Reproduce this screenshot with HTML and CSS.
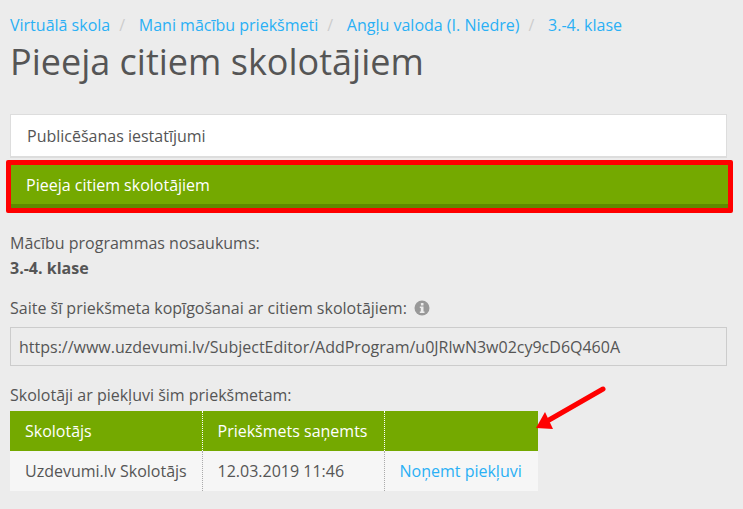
FILE: index.html
```html
<!DOCTYPE html>
<html lang="lv">
<head>
<meta charset="utf-8">
<title>Pieeja citiem skolotājiem</title>
<link rel="stylesheet" href="styles.css">
</head>
<body>
<main class="page">
  <nav class="crumbs">
    <a href="#">Virtuālā skola</a><span class="sep">/</span>
    <a href="#">Mani mācību priekšmeti</a><span class="sep">/</span>
    <a href="#">Angļu valoda (I. Niedre)</a><span class="sep">/</span>
    <a href="#">3.-4. klase</a>
  </nav>
  <h1 class="title">Pieeja citiem skolotājiem</h1>
  <div class="tab">Publicēšanas iestatījumi</div>
  <div class="frame"><div class="tab-active">Pieeja citiem skolotājiem</div></div>
  <p class="label">Mācību programmas nosaukums:</p>
  <p class="value">3.-4. klase</p>
  <p class="label link-label">Saite šī priekšmeta kopīgošanai ar citiem skolotājiem:
    <svg class="info" viewBox="0 0 16 16" width="16" height="16"><circle cx="8" cy="8" r="7.5" fill="#999"/><rect x="6.9" y="3" width="2.6" height="2.4" rx=".5" fill="#ececec"/><path d="M5.8 6.6h3.7v5h1v1.4H5.8v-1.4h1V8h-1z" fill="#ececec"/></svg>
  </p>
  <div class="url">https://www.uzdevumi.lv/SubjectEditor/AddProgram/u0JRlwN3w02cy9cD6Q460A</div>
  <p class="label table-label">Skolotāji ar piekļuvi šim priekšmetam:</p>
  <table class="grid">
    <thead>
      <tr><th class="c1">Skolotājs</th><th class="c2">Priekšmets saņemts</th><th class="c3"></th></tr>
    </thead>
    <tbody>
      <tr><td>Uzdevumi.lv Skolotājs</td><td>12.03.2019 11:46</td><td><a href="#">Noņemt piekļuvi</a></td></tr>
    </tbody>
  </table>
</main>
<svg class="arrow" viewBox="0 0 743 509" width="743" height="509"><path d="M603 389 L549 420" stroke="#f00" stroke-width="5" stroke-linecap="round" fill="none"/><path d="M536 428 L545 412 L553 429 Z" fill="#f00"/></svg>
</body>
</html>
```
FILE: styles.css
```css
* { box-sizing: border-box; }
html, body { margin: 0; padding: 0; }
body {
  position: relative;
  width: 743px;
  height: 509px;
  overflow: hidden;
  background: #ececec;
  color: #555;
  font-family: "Open Sans", sans-serif;
  font-size: 16px;
  line-height: 22px;
}
.page { padding: 14px 16px 0 10px; }
a { color: #2ab0f5; text-decoration: none; }
.crumbs { height: 22px; white-space: nowrap; }
.sep { color: #ccc; margin: 0 9.6px 0 9px; }
.title {
  margin: 1px 0 0;
  font-size: 36px;
  line-height: 50px;
  font-weight: 400;
  color: #555;
}
.tab {
  margin-top: 27px;
  height: 44px;
  padding: 0 16px;
  background: #fff;
  border: 2px solid #ddd;
  border-width: 1px 1px 2px 1px;
  line-height: 42px;
}
.frame {
  margin: 2px -6px 0 -4px;
  border: 5px solid #f00;
  border-radius: 2px;
}
.tab-active {
  height: 43px;
  padding: 0 15px;
  background: #74a900;
  border-bottom: 4px solid #5f8a00;
  color: #fff;
  line-height: 40px;
}
.label, .value { margin: 0; }
.label { margin-top: 19px; }
.value { margin-top: 3px; font-weight: 700; }
.link-label { margin-top: 18px; display: flex; align-items: center; gap: 7px; }
.info { flex: none; }
.url {
  margin-top: 8px;
  height: 39px;
  padding: 0 8px;
  border: 1px solid #ccc;
  line-height: 38px;
  white-space: nowrap;
}
.table-label { margin-top: 18px; }
.grid {
  margin-top: 5px;
  width: 528px;
  border-collapse: collapse;
  table-layout: fixed;
}
.grid th, .grid td { height: 40px; padding: 0 15px; text-align: left; white-space: nowrap; }
.grid th { background: #74a900; color: #fff; font-weight: 400; }
.grid td { background: #f6f6f6; }
.grid th + th { border-left: 1px dotted #fff; }
.grid td + td { border-left: 1px dotted #aaa; }
.c1 { width: 192px; }
.c2 { width: 182px; }
.c3 { width: 154px; }
.arrow { position: absolute; left: 0; top: 0; pointer-events: none; }
```
